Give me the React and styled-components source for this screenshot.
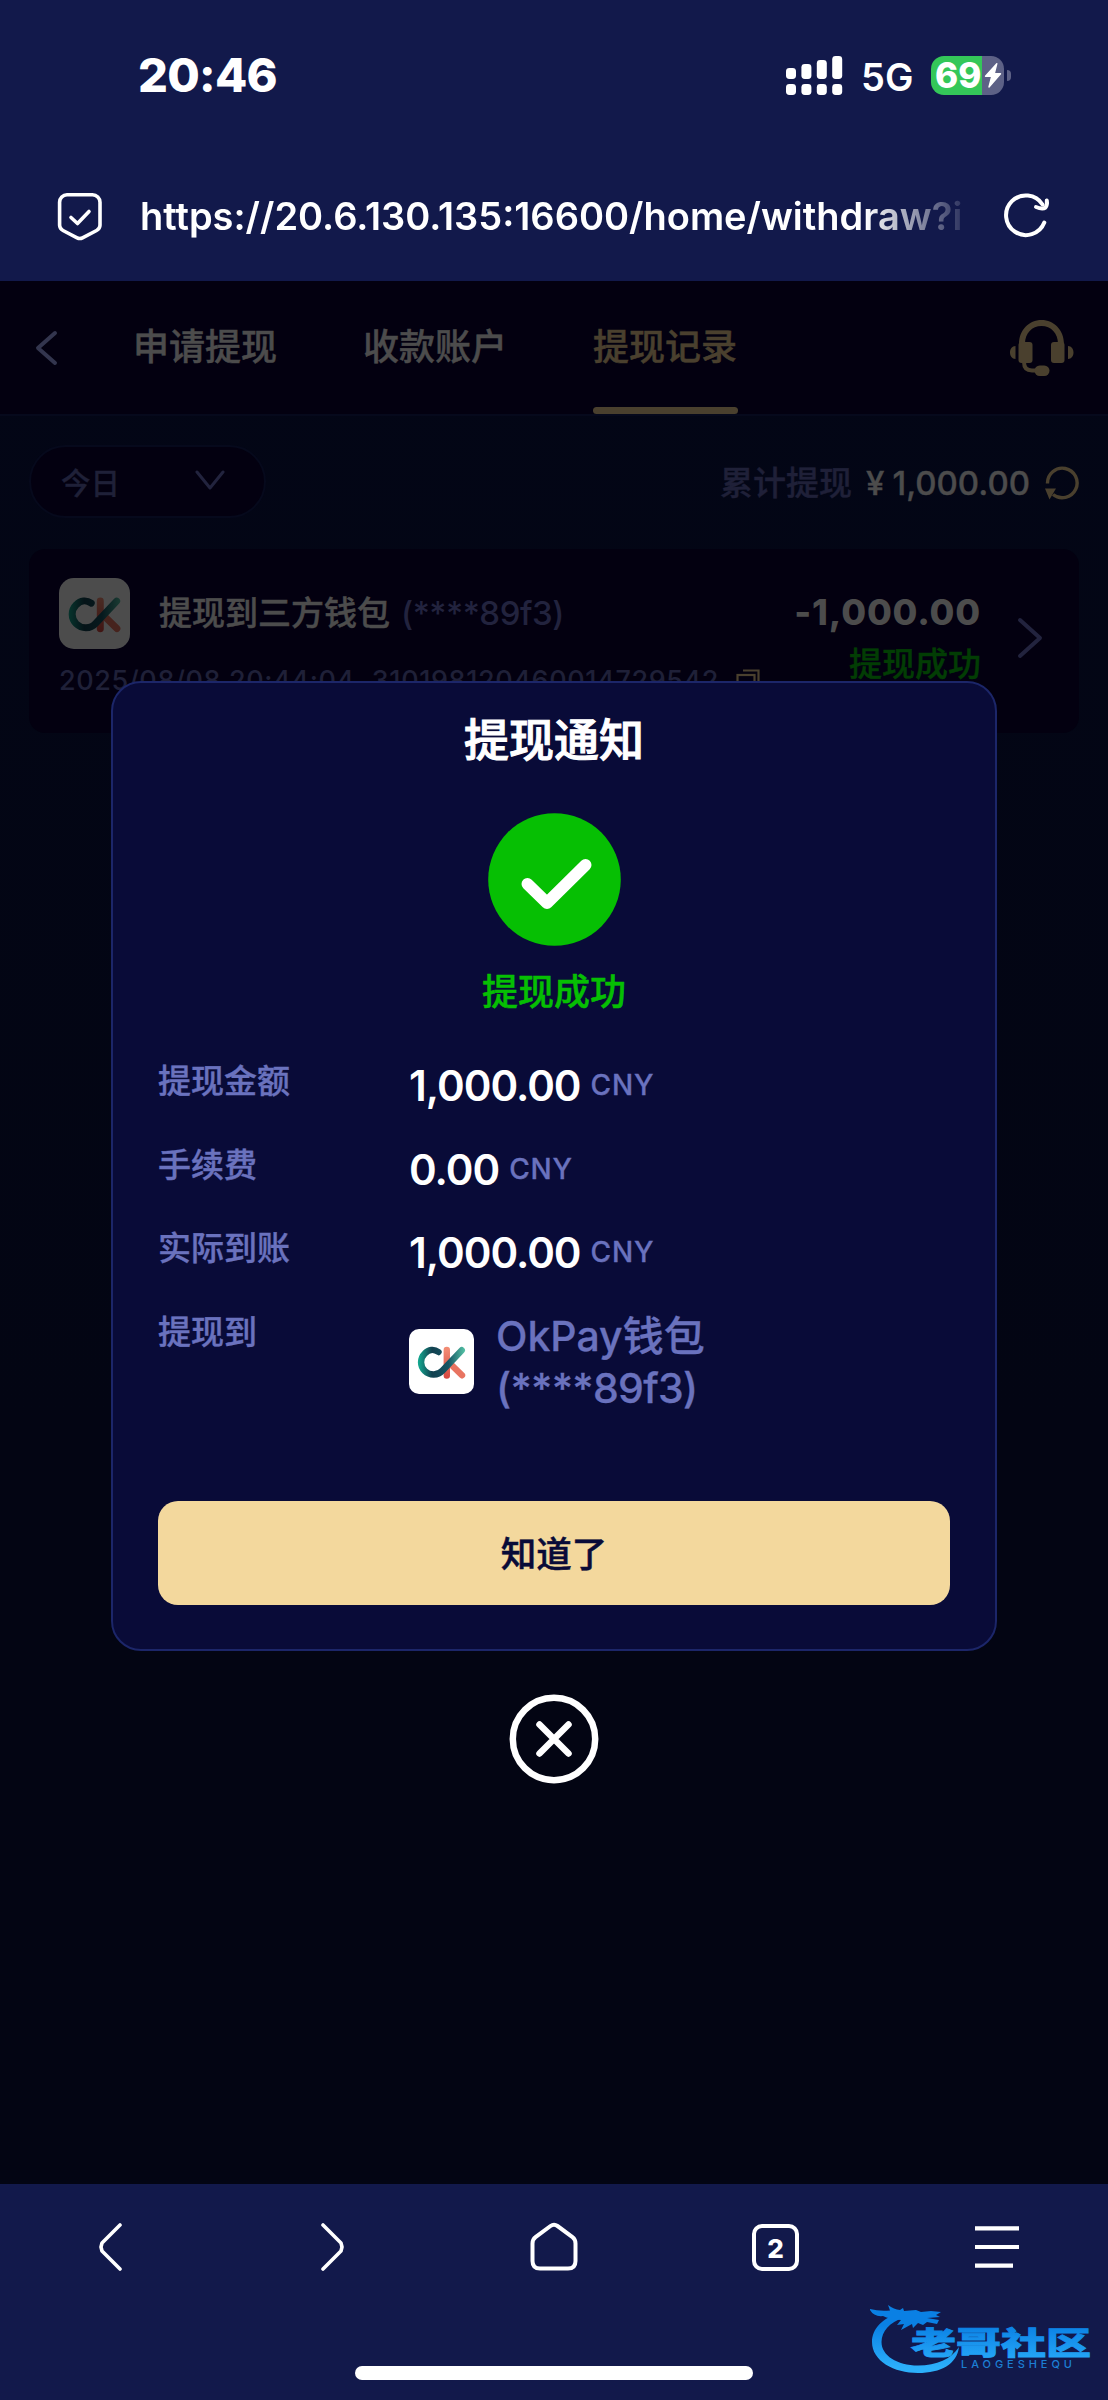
import styled, { createGlobalStyle } from "styled-components";

const GlobalStyle = createGlobalStyle`
  * {
    box-sizing: border-box;
  }
  body {
    margin: 0;
    background: #030412;
    font-family: Inter, "Noto Sans CJK SC", sans-serif;
    font-weight: 500;
    color: #fff;
  }
  button {
    padding: 0;
    border: 0;
    background: none;
    font: inherit;
    color: inherit;
  }
  svg {
    display: block;
    flex: none;
  }
`

const Page = styled.div`
  width: 1108px;
  height: 2400px;
  display: flex;
  flex-direction: column;
  overflow: hidden;
`

/* ---------- top of the browser ---------- */

const BrowserTop = styled.header`
  height: 281px;
  background: #12194b;
`

const StatusBar = styled.div`
  display: flex;
  align-items: center;
  height: 150px;
  padding: 0 97px 0 138px;
`

const Time = styled.span`
  flex: 1;
  font-size: 47px;
  font-weight: 800;
  line-height: 56px;
  letter-spacing: -0.7px;
`

const Network = styled.span`
  margin: 3px 0 0 18px;
  width: 70px;
  font-size: 38px;
  font-weight: 600;
  line-height: 40px;
`

const Battery = styled.div`
  display: flex;
  align-items: center;
  gap: 3px;
`

const BatteryBody = styled.div`
  display: flex;
  align-items: center;
  width: 73px;
  height: 39px;
  padding-left: 4px;
  border-radius: 13px;
  background: linear-gradient(90deg, #34c759 51px, #5d6186 51px);
  font-size: 35px;
  font-weight: 800;
  line-height: 39px;
`

const BatteryPercent = styled.span`
  width: 49px;
`

const BatteryCap = styled.div`
  width: 4px;
  height: 11px;
  border-radius: 0 4px 4px 0;
  background: #5d6186;
`

const AddressBar = styled.div`
  display: flex;
  align-items: center;
  height: 132px;
  padding: 0 57px 0 56px;
`

const Url = styled.div`
  width: 828px;
  margin: 0 34px 0 36px;
  overflow: hidden;
  white-space: nowrap;
  font-size: 38px;
  font-weight: 600;
  line-height: 50px;
  mask-image: linear-gradient(90deg, #000 725px, transparent 836px);
`

/* ---------- web page ---------- */

const Content = styled.main`
  position: relative;
  flex: 1;
  background: linear-gradient(180deg, #030616, #030513 60%);
`

const TabHeader = styled.nav`
  display: flex;
  align-items: center;
  height: 135px;
  padding: 0 34px;
  background: #030010;
  border-bottom: 2px solid #06091c;
`

const Tabs = styled.div`
  display: flex;
  flex: 1;
  align-self: stretch;
  gap: 86px;
  margin-left: 75px;
`

const Tab = styled.button`
  display: flex;
  flex-direction: column;
  justify-content: space-between;
  width: 144px;
  height: 133px;
  padding-top: 46px;
  font-size: 36px;
  line-height: 40px;
  white-space: nowrap;
  color: ${(props) => (props.$active ? "#4a402e" : "#4c4c4c")};
  -webkit-text-stroke: 0.5px;

  &:after {
    content: "";
    width: 145px;
    height: 7px;
    border-radius: 4px;
    background: ${(props) => (props.$active ? "#4a402e" : "transparent")};
  }
`

const FilterBar = styled.div`
  display: flex;
  align-items: center;
  justify-content: space-between;
  height: 73px;
  margin: 29px 29px 31px;
`

const DateSelect = styled.button`
  display: flex;
  align-items: center;
  justify-content: space-between;
  width: 237px;
  height: 73px;
  padding: 0 39px 2px 30px;
  border: 2px solid #06091c;
  border-radius: 37px;
  background: #030010;
  color: #1f2038;
  font-size: 29.500px;
  -webkit-text-stroke: 0.3px;
`

const Total = styled.div`
  display: flex;
  align-items: center;
  padding-top: 3px;
  font-size: 33px;
  line-height: 40px;
  color: #1f2038;
  -webkit-text-stroke: 0.4px;
`

const TotalValue = styled.span`
  display: flex;
  gap: 8px;
  margin: 0 15px 0 14px;
  color: #4c4c4c;
`

const RecordCard = styled.section`
  display: flex;
  align-items: flex-start;
  height: 184px;
  margin: 0 29px;
  padding: 29px 36px 0 30px;
  border-radius: 16px;
  background: #030010;
  color: #22233e;
`

const RecordMain = styled.div`
  flex: 1;
`

const RecordTitle = styled.div`
  display: flex;
  align-items: center;
  height: 71px;
  gap: 29px;
  font-size: 33px;
  line-height: 40px;
  letter-spacing: -0.5px;
  white-space: nowrap;

  span {
    padding-bottom: 1px;
  }
  b {
    font-weight: 500;
    letter-spacing: 0;
    color: #4c4c4c;
    margin-right: 11px;
    -webkit-text-stroke: 0.5px;
  }
`

const RecordMeta = styled.div`
  display: flex;
  align-items: center;
  gap: 17px;
  margin-top: 15px;
  font-size: 27px;
  line-height: 34px;
  letter-spacing: 0.6px;
  white-space: nowrap;
  color: #1f2038;
`

const RecordResult = styled.div`
  display: flex;
  flex-direction: column;
  align-items: flex-end;
  padding: 12px 36px 0 0;
`

const RecordAmount = styled.span`
  font-size: 36px;
  font-weight: 800;
  line-height: 44px;
  letter-spacing: 0.8px;
  color: #4c4c4c;
`

const RecordStatus = styled.span`
  margin-top: 10px;
  font-size: 33px;
  line-height: 40px;
  color: #023d04;
  -webkit-text-stroke: 0.4px;
`

const LogoTile = styled.div`
  display: flex;
  flex: none;
  align-items: center;
  justify-content: center;
  width: ${(props) => props.$size}px;
  height: ${(props) => props.$size}px;
  border-radius: ${(props) => (props.$dim ? 15 : 10)}px;
  background: #fff;
  filter: ${(props) => (props.$dim ? "brightness(0.3)" : "none")};
`

/* ---------- notice dialog ---------- */

const Overlay = styled.div`
  position: absolute;
  inset: 0;
  display: flex;
  flex-direction: column;
  align-items: center;
  padding-top: 400px;
`

const Dialog = styled.div`
  display: flex;
  flex-direction: column;
  align-items: center;
  width: 886px;
  height: 970px;
  padding: 31px 45px 0;
  border: 2px solid #1c2669;
  border-radius: 30px;
  background: #090b38;
`

const DialogTitle = styled.h1`
  margin: 0 0 45px;
  font-size: 45px;
  font-weight: 500;
  line-height: 54px;
  -webkit-text-stroke: 1px;
`

const DialogStatus = styled.p`
  margin: 26px 0 50px;
  font-size: 36px;
  line-height: 40px;
  color: #06bf03;
  -webkit-text-stroke: 0.5px;
`

const Details = styled.dl`
  display: grid;
  grid-template-columns: 251px 1fr;
  grid-template-rows: 83.5px 83.5px 83.5px 170px;
  width: 792px;
  height: 439px;
  margin: 0;
`

const Label = styled.dt`
  margin-top: -1px;
  font-size: 33px;
  line-height: 40px;
  color: #6a72be;
  -webkit-text-stroke: 0.4px;
`

const Amount = styled.dd`
  display: flex;
  align-items: flex-start;
  gap: 10px;
  margin: 1px 0 0;
  font-size: 42px;
  font-weight: 600;
  line-height: 46px;
  letter-spacing: -1px;

  small {
    font-size: 28px;
    font-weight: 500;
    line-height: 45px;
    letter-spacing: 0.8px;
    color: #6a72be;
    -webkit-text-stroke: 0.3px;
  }
`

const Wallet = styled.dd`
  display: flex;
  align-items: center;
  gap: 22px;
  height: 104px;
  margin: -3px 0 0;
  font-size: 41px;
  line-height: 52px;
  color: #6a72be;
  -webkit-text-stroke: 0.3px;
`

const WalletNumber = styled.span`
  letter-spacing: -0.7px;
`

const ConfirmButton = styled.button`
  width: 792px;
  height: 104px;
  padding-bottom: 4px;
  border-radius: 20px;
  background: #f3d89d;
  color: #090b38;
  font-size: 35.500px;
  -webkit-text-stroke: 0.5px;
`

const CloseButton = styled.button`
  margin-top: 43px;
`

/* ---------- bottom of the browser ---------- */

const BrowserBottom = styled.footer`
  position: relative;
  display: flex;
  flex-direction: column;
  align-items: center;
  height: 216px;
  background: #12194b;
`

const Toolbar = styled.div`
  display: grid;
  grid-template-columns: repeat(5, 1fr);
  justify-items: center;
  align-items: center;
  width: 100%;
  height: 126px;
`

const TabCount = styled.div`
  display: flex;
  align-items: center;
  justify-content: center;
  width: 47px;
  height: 47px;
  padding-top: 2px;
  border: 4px solid #fff;
  border-radius: 10px;
  font-size: 26px;
  font-weight: 800;
`

const HomeIndicator = styled.div`
  width: 398px;
  height: 14px;
  margin-top: 56px;
  border-radius: 7px;
  background: #fff;
`

const Watermark = styled.div`
  position: absolute;
  right: 10px;
  bottom: 22px;
`

/* ---------- icons ---------- */

function SignalIcon() {
  const tops = [12, 8, 4, 0]
  return (
    <svg width="57" height="39" fill="#fff">
      {tops.map((top, i) => (
        <g key={top}>
          <rect x={i * 15.4} y={top} width="10" height={23 - top} rx="3.4" />
          <rect x={i * 15.4} y="28" width="10" height="11" rx="3.4" />
        </g>
      ))}
    </svg>
  )
}

function BoltIcon() {
  return (
    <svg width="18" height="27" viewBox="0 0 18 27" fill="#fff" stroke="#fff" strokeWidth="1.4" strokeLinejoin="round">
      <path d="M12.800 1.700 1.500 14.300h6.300L5 25 16.500 11.800h-6.300z" />
    </svg>
  )
}

function ShieldIcon() {
  return (
    <svg width="48" height="50" viewBox="0 0 48 50" fill="none" stroke="#fff" strokeWidth="3.6" strokeLinecap="round" strokeLinejoin="round">
      <path d="M11 3.800h25.500a7.500 7.500 0 0 1 7.500 7.500v23a6 6 0 0 1-3.400 5.200L26.500 46.800a6 6 0 0 1-5.400 0L7 39.500a6 6 0 0 1-3.400-5.200v-23A7.500 7.500 0 0 1 11 3.800z" />
      <path d="m15 26.500 6.500 6L33 20.500" />
    </svg>
  )
}

function RefreshIcon() {
  return (
    <svg width="49" height="48" viewBox="0 0 49 48" fill="none" stroke="#fff" strokeWidth="4" strokeLinecap="round" strokeLinejoin="round">
      <path d="M42.300 30.500A19.800 19.800 0 1 1 40.500 12.500" />
      <path d="M34 15q6.500 2.500 9.500.5 2-3 1.300-7" />
    </svg>
  )
}

function ChevronIcon({ points, width, height, color, stroke }) {
  return (
    <svg width={width} height={height} fill="none" stroke={color} strokeWidth={stroke} strokeLinecap="round" strokeLinejoin="round">
      <polyline points={points} />
    </svg>
  )
}

function HeadsetIcon() {
  return (
    <svg width="64" height="56" viewBox="0 0 64 56" fill="#4a402e">
      <path d="M9 24C9 10 19 0 31.500 0S54 10 54 24h-6C48 13 41 6 31.500 6S15 13 15 24z" />
      <rect x="8.500" y="22" width="14" height="21" rx="3" />
      <rect x="41" y="22" width="13.500" height="21" rx="3" />
      <path d="M5.500 26v13C2 39 0 36 0 32.500S2 26 5.500 26zM58 26v13c3.500 0 5.500-3 5.500-6.500S61.500 26 58 26z" />
      <path d="M14 42q0 8.500 8 8.500h6" fill="none" stroke="#4a402e" strokeWidth="4" />
      <rect x="24.500" y="45.500" width="15" height="10.500" rx="5.200" />
    </svg>
  )
}

function ReloadIcon() {
  return (
    <svg width="34" height="34" viewBox="0 0 34 34">
      <path d="M2.500 17.500A14.800 14.800 0 1 1 8 28.500" fill="none" stroke="#4a402e" strokeWidth="3.400" />
      <path d="M0 22.500h11L4.500 33.500z" fill="#4a402e" />
    </svg>
  )
}

function CopyIcon() {
  return (
    <svg width="24" height="24" fill="none" stroke="#4a402e" strokeWidth="2.200">
      <rect x="1.500" y="6" width="17" height="17" />
      <path d="M7 1.500h15.500V17" />
    </svg>
  )
}

function PayLogo({ size, id }) {
  return (
    <svg width={size} height={size} viewBox="0 0 65 65" fill="none" strokeLinecap="round">
      <defs>
        <linearGradient id={id + "c"} gradientUnits="userSpaceOnUse" x1="9" y1="30" x2="56" y2="30">
          <stop offset="0" stopColor="#14ab92" />
          <stop offset="0.3" stopColor="#12404f" />
          <stop offset="0.65" stopColor="#155564" />
          <stop offset="1" stopColor="#55c3a6" />
        </linearGradient>
        <linearGradient id={id + "k"} gradientUnits="userSpaceOnUse" x1="38" y1="20" x2="38" y2="50">
          <stop offset="0" stopColor="#f28b73" />
          <stop offset="1" stopColor="#d5453f" />
        </linearGradient>
      </defs>
      <path d="M37.800 21v25.500" stroke={`url(#${id}k)`} strokeWidth="6.400" />
      <path d="m42 35.500 11 10.800" stroke="#e87461" strokeWidth="6.400" />
      <path d="M29.500 23C25 19.800 19.500 20.500 15.800 24.500c-5 5-5 12.500 0 17.500 5 4.800 13 4.800 17.800-.5L52.800 21.200" stroke={`url(#${id}c)`} strokeWidth="6.400" />
    </svg>
  )
}

function SuccessIcon() {
  return (
    <svg width="133" height="133" viewBox="0 0 133 133">
      <circle cx="66.500" cy="66.500" r="66.300" fill="#06bf03" />
      <path d="m39.500 71 19.500 19L97.500 52" fill="none" stroke="#fff" strokeWidth="12" strokeLinecap="round" strokeLinejoin="round" />
    </svg>
  )
}

function CloseIcon() {
  return (
    <svg width="90" height="90" viewBox="0 0 90 90" fill="none" stroke="#fff" strokeWidth="6.500" strokeLinecap="round">
      <circle cx="45" cy="45" r="41.200" />
      <path d="m30.500 30.500 29 29m0-29-29 29" />
    </svg>
  )
}

function HomeIcon() {
  return (
    <svg width="50" height="50" viewBox="0 0 50 50" fill="none" stroke="#fff" strokeWidth="4" strokeLinejoin="round">
      <path d="M3.500 21.500q0-4 3-6.300L21.500 4q3.500-2.500 7 0l15 11.200q3 2.300 3 6.300V39q0 7.500-7.500 7.500H11Q3.500 46.500 3.500 39z" />
    </svg>
  )
}

function MenuIcon() {
  return (
    <svg width="44" height="44" fill="none" stroke="#fff" strokeWidth="4.200">
      <path d="M0 3.300h44M0 22h44M0 40.700h38" />
    </svg>
  )
}

function CommunityLogo() {
  return (
    <svg width="230" height="80" viewBox="868 2298 230 80">
      <defs>
        <linearGradient id="water" gradientUnits="userSpaceOnUse" x1="0" y1="2325" x2="0" y2="2368">
          <stop offset="0" stopColor="#0a80e4" />
          <stop offset="1" stopColor="#2cb0fb" />
        </linearGradient>
      </defs>
      <g fill="url(#water)">
        <path d="M900 2313C882 2318 872 2329 872 2342c0 19 22 31 46 31 23 0 39-9 41-26-8 12-22 18.500-41 18.500-21 0-36.500-10-36.500-23.500 0-11 8.500-20 21.500-24z" />
        <path d="M870 2309q9 2.500 20 1.500l-2-5.500q6 4.500 12 5l3-2 1 3 12-1 5 2 10-1 10 1-5 3 4 2-13 1 12 2-2 4-10-2-4 3-5-2-5 5-1-4-11 6 3-6-7 1 4-5q-12-1-18-4-9 1-13-6z" />
        <text x="911" y="2353.500" fontFamily="'Noto Sans CJK SC', sans-serif" fontSize="31" fontWeight="900" stroke="url(#water)" strokeWidth="0.8" textLength="180" lengthAdjust="spacingAndGlyphs">
          老哥社区
        </text>
      </g>
      <text x="961" y="2367.500" fill="#1c7fd4" fontFamily="Inter, sans-serif" fontSize="11" fontWeight="500" textLength="111">
        LAOGESHEQU
      </text>
    </svg>
  )
}

const details = [
  { label: "提现金额", value: "1,000.00" },
  { label: "手续费", value: "0.00" },
  { label: "实际到账", value: "1,000.00" },
]

export default function App() {
  return (
    <Page>
      <GlobalStyle />
      <BrowserTop>
        <StatusBar>
          <Time>20:46</Time>
          <SignalIcon />
          <Network>5G</Network>
          <Battery>
            <BatteryBody>
              <BatteryPercent>69</BatteryPercent>
              <BoltIcon />
            </BatteryBody>
            <BatteryCap />
          </Battery>
        </StatusBar>
        <AddressBar>
          <ShieldIcon />
          <Url>https://20.6.130.135:16600/home/withdraw?i</Url>
          <RefreshIcon />
        </AddressBar>
      </BrowserTop>

      <Content>
        <TabHeader>
          <ChevronIcon width={24} height={38} points="21,4 4,19 21,34" color="#33354e" stroke={4} />
          <Tabs>
            <Tab>申请提现</Tab>
            <Tab>收款账户</Tab>
            <Tab $active>提现记录</Tab>
          </Tabs>
          <HeadsetIcon />
        </TabHeader>

        <FilterBar>
          <DateSelect>
            今日
            <ChevronIcon width={30} height={22} points="2,2 15,18 28,2" color="#22233e" stroke={3} />
          </DateSelect>
          <Total>
            累计提现
            <TotalValue>
              <span>¥</span>
              <span>1,000.00</span>
            </TotalValue>
            <ReloadIcon />
          </Total>
        </FilterBar>

        <RecordCard>
          <RecordMain>
            <RecordTitle>
              <LogoTile $size={71} $dim>
                <PayLogo size={71} id="record" />
              </LogoTile>
              <span>
                <b>提现到三方钱包</b>
                (****89f3)
              </span>
            </RecordTitle>
            <RecordMeta>
              <span>2025/08/08 20:44:04</span>
              <span>310198120460014729542</span>
              <CopyIcon />
            </RecordMeta>
          </RecordMain>
          <RecordResult>
            <RecordAmount>-1,000.00</RecordAmount>
            <RecordStatus>提现成功</RecordStatus>
          </RecordResult>
          <ChevronIcon width={26} height={118} points="3,42 23,60 3,78" color="#22233e" stroke={4} />
        </RecordCard>

        <Overlay>
          <Dialog>
            <DialogTitle>提现通知</DialogTitle>
            <SuccessIcon />
            <DialogStatus>提现成功</DialogStatus>
            <Details>
              {details.map((item) => [
                <Label key={item.label}>{item.label}</Label>,
                <Amount key={item.label + "value"}>
                  {item.value}
                  <small>CNY</small>
                </Amount>,
              ])}
              <Label>提现到</Label>
              <Wallet>
                <LogoTile $size={65}>
                  <PayLogo size={65} id="wallet" />
                </LogoTile>
                <span>
                  OkPay钱包
                  <br />
                  <WalletNumber>(****89f3)</WalletNumber>
                </span>
              </Wallet>
            </Details>
            <ConfirmButton>知道了</ConfirmButton>
          </Dialog>
          <CloseButton>
            <CloseIcon />
          </CloseButton>
        </Overlay>
      </Content>

      <BrowserBottom>
        <Toolbar>
          <ChevronIcon width={24} height={48} points="21,2 3,20 2,24 3,28 21,46" color="#fff" stroke={3.6} />
          <ChevronIcon width={24} height={48} points="3,2 21,20 22,24 21,28 3,46" color="#fff" stroke={3.6} />
          <HomeIcon />
          <TabCount>2</TabCount>
          <MenuIcon />
        </Toolbar>
        <HomeIndicator />
        <Watermark>
          <CommunityLogo />
        </Watermark>
      </BrowserBottom>
    </Page>
  )
}
